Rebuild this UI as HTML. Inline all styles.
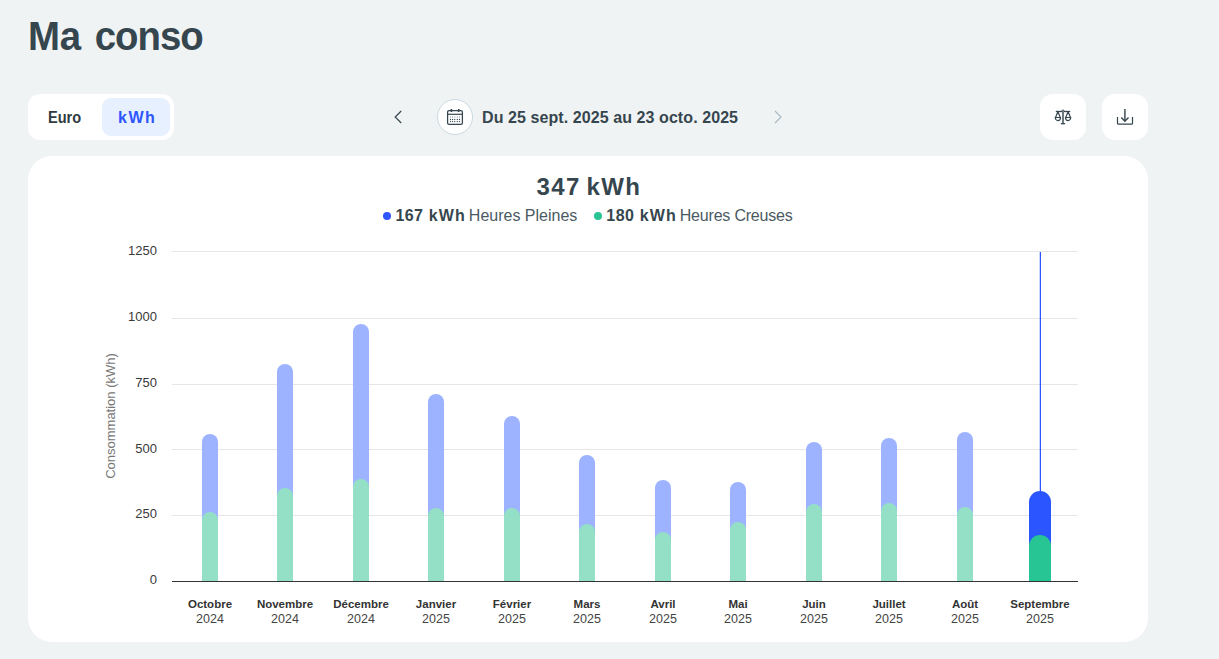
<!DOCTYPE html>
<html><head><meta charset="utf-8">
<style>
*{box-sizing:border-box;margin:0;padding:0}
html,body{width:1219px;height:659px;overflow:hidden;background:#f0f3f4;font-family:"Liberation Sans",sans-serif;color:#36464e}
.abs{position:absolute}
.title{left:28px;top:12px;font-size:40px;font-weight:bold;letter-spacing:-0.3px;transform:scaleX(0.96);transform-origin:0 0;line-height:48px;color:#36464e;white-space:nowrap}
.toggle{left:28px;top:94px;width:146px;height:46px;background:#fff;border-radius:12px}
.euro{left:48px;top:109px;font-size:16px;transform:scaleX(0.91);transform-origin:0 0;font-weight:bold;line-height:18px;color:#2f3b42}
.kwhtab{left:102px;top:98px;width:68px;height:38px;background:#e7f0fe;border-radius:9px}
.kwh{left:118px;top:109px;font-size:16px;font-weight:bold;letter-spacing:1.5px;line-height:18px;color:#2f55ff}
.circle{left:437px;top:99px;width:36px;height:36px;border-radius:50%;background:#fff;border:1px solid #c9d8e0}
.date{left:482px;top:109px;letter-spacing:0.08px;font-size:16px;font-weight:bold;line-height:18px;color:#36464e;white-space:nowrap}
.btn{top:94px;width:46px;height:46px;background:#fff;border-radius:13px}
.card{left:28px;top:156px;width:1120px;height:486px;background:#fff;border-radius:24px}
.total{left:29px;width:1120px;top:173px;letter-spacing:1.4px;word-spacing:-2.4px;text-align:center;font-size:24px;font-weight:bold;line-height:28px;color:#36464e}
.legend{left:28px;width:1120px;top:207px;text-align:center;font-size:16px;line-height:18px;color:#4a5a62;white-space:nowrap}
.legend b{color:#36464e;letter-spacing:0.4px;word-spacing:0.6px}
.hc{letter-spacing:-0.2px}
.lk{letter-spacing:1.1px;margin-right:3px}
.dot{display:inline-block;width:8px;height:8px;border-radius:50%;vertical-align:1px;margin-right:4px}
svg text{font-family:"Liberation Sans",sans-serif}
.yl{font-size:13px;fill:#3a3a3a}
.xm{font-size:11.5px;font-weight:bold;fill:#333}
.xy{font-size:12.5px;fill:#444}
.yt{font-size:13px;fill:#777}
</style></head><body>
<div class="abs title">Ma <span style="letter-spacing:-1.1px;margin-left:3.8px">conso</span></div>
<div class="abs toggle"></div>
<div class="abs euro">Euro</div>
<div class="abs kwhtab"></div>
<div class="abs kwh">kWh</div>
<svg class="abs" style="left:390px;top:108px" width="16" height="18" viewBox="0 0 16 18"><path d="M11.2 3 L5.2 9 L11.2 15" fill="none" stroke="#36464e" stroke-width="1.2"/></svg>
<div class="abs circle"></div>
<svg class="abs" style="left:443px;top:105px" width="24" height="24" viewBox="0 0 24 24"><rect x="4.6" y="5.6" width="14.8" height="13.8" rx="1.4" fill="none" stroke="#36464e" stroke-width="1.25"/><path d="M4.6 9.3H19.4" stroke="#36464e" stroke-width="1.2"/><path d="M8.4 4V7M15.7 4V7" stroke="#36464e" stroke-width="1.6"/><g fill="#36464e"><circle cx="7.5" cy="14.5" r="0.65"/><circle cx="9.6" cy="14.5" r="0.65"/><circle cx="11.8" cy="14.5" r="0.65"/><circle cx="14.3" cy="14.5" r="0.65"/><circle cx="16.5" cy="14.5" r="0.65"/><circle cx="7.5" cy="16.6" r="0.65"/><circle cx="9.6" cy="16.6" r="0.65"/><circle cx="11.8" cy="16.6" r="0.65"/><circle cx="14.3" cy="16.6" r="0.65"/><circle cx="16.5" cy="16.6" r="0.65"/></g><g fill="#8a969b"><rect x="7.1" y="11.4" width="0.8" height="1.3"/><rect x="9.2" y="11.4" width="0.8" height="1.3"/><rect x="11.4" y="11.4" width="0.8" height="1.3"/><rect x="13.9" y="11.4" width="0.8" height="1.3"/><rect x="16.1" y="11.4" width="0.8" height="1.3"/></g></svg>
<div class="abs date">Du 25 sept. 2025 au 23 octo. 2025</div>
<svg class="abs" style="left:770px;top:108px" width="16" height="18" viewBox="0 0 16 18"><path d="M5 3 L11 9 L5 15" fill="none" stroke="#a5b7c0" stroke-width="1.1"/></svg>
<div class="abs btn" style="left:1040px"></div>
<div class="abs btn" style="left:1102px"></div>
<svg class="abs" style="left:1051px;top:105px" width="24" height="24" viewBox="0 0 24 24"><g fill="none" stroke="#36464e"><path d="M4.8 6.5H19.2" stroke-width="1.3"/><path d="M12 7.3V18.4" stroke="#5d6b71" stroke-width="1.8"/><circle cx="12" cy="6.1" r="1.1" stroke-width="1" fill="#fff"/><path d="M9.9 18.7H14.1" stroke-width="1.3"/><path d="M6.9 6.8L4.5 12.4M6.9 6.8L9.3 12.4M4.3 12.5H9.5A2.6 3.1 0 0 1 4.3 12.5Z" stroke-width="1.2"/><path d="M17.1 6.8L14.7 12.4M17.1 6.8L19.5 12.4M14.5 12.5H19.7A2.6 3.1 0 0 1 14.5 12.5Z" stroke-width="1.2"/></g></svg>
<svg class="abs" style="left:1113px;top:105px" width="24" height="24" viewBox="0 0 24 24"><g fill="none" stroke="#36464e"><path d="M11.9 4V15.8" stroke="#5d6b71" stroke-width="1.8"/><path d="M8.3 12.6L11.9 16.2L15.5 12.6" stroke-width="1.4"/><path d="M4.5 12V18.2Q4.5 19.2 5.5 19.2H18.5Q19.5 19.2 19.5 18.2V12" stroke-width="1.2"/></g></svg>
<div class="abs card"></div>
<div class="abs total">347 kWh</div>
<div class="abs legend"><span class="dot" style="background:#2f55ff"></span><b>167 <span class="lk">kWh</span></b>Heures Pleines<span style="display:inline-block;width:17px"></span><span class="dot" style="background:#2ac594"></span><b>180 <span class="lk">kWh</span></b><span class="hc">Heures Creuses</span></div>
<svg class="abs" style="left:0;top:0" width="1219" height="659">
<rect x="172" y="251" width="906" height="1" fill="#e6e6e6"/>
<rect x="172" y="318" width="906" height="1" fill="#e6e6e6"/>
<rect x="172" y="384" width="906" height="1" fill="#e6e6e6"/>
<rect x="172" y="449" width="906" height="1" fill="#e6e6e6"/>
<rect x="172" y="515" width="906" height="1" fill="#e6e6e6"/>
<path d="M202.0 581V442.0A8.0 8.0 0 0 1 218.0 442.0V581Z" fill="#9db3ff"/>
<path d="M202.0 581V520.0A8.0 8.0 0 0 1 218.0 520.0V581Z" fill="#93e0c6"/>
<path d="M277.0 581V372.0A8.0 8.0 0 0 1 293.0 372.0V581Z" fill="#9db3ff"/>
<path d="M277.0 581V496.0A8.0 8.0 0 0 1 293.0 496.0V581Z" fill="#93e0c6"/>
<path d="M353.0 581V332.0A8.0 8.0 0 0 1 369.0 332.0V581Z" fill="#9db3ff"/>
<path d="M353.0 581V487.0A8.0 8.0 0 0 1 369.0 487.0V581Z" fill="#93e0c6"/>
<path d="M428.0 581V402.0A8.0 8.0 0 0 1 444.0 402.0V581Z" fill="#9db3ff"/>
<path d="M428.0 581V516.0A8.0 8.0 0 0 1 444.0 516.0V581Z" fill="#93e0c6"/>
<path d="M504.0 581V424.0A8.0 8.0 0 0 1 520.0 424.0V581Z" fill="#9db3ff"/>
<path d="M504.0 581V516.0A8.0 8.0 0 0 1 520.0 516.0V581Z" fill="#93e0c6"/>
<path d="M579.0 581V463.0A8.0 8.0 0 0 1 595.0 463.0V581Z" fill="#9db3ff"/>
<path d="M579.0 581V532.0A8.0 8.0 0 0 1 595.0 532.0V581Z" fill="#93e0c6"/>
<path d="M655.0 581V488.0A8.0 8.0 0 0 1 671.0 488.0V581Z" fill="#9db3ff"/>
<path d="M655.0 581V540.0A8.0 8.0 0 0 1 671.0 540.0V581Z" fill="#93e0c6"/>
<path d="M730.0 581V490.0A8.0 8.0 0 0 1 746.0 490.0V581Z" fill="#9db3ff"/>
<path d="M730.0 581V530.0A8.0 8.0 0 0 1 746.0 530.0V581Z" fill="#93e0c6"/>
<path d="M806.0 581V450.0A8.0 8.0 0 0 1 822.0 450.0V581Z" fill="#9db3ff"/>
<path d="M806.0 581V512.0A8.0 8.0 0 0 1 822.0 512.0V581Z" fill="#93e0c6"/>
<path d="M881.0 581V446.0A8.0 8.0 0 0 1 897.0 446.0V581Z" fill="#9db3ff"/>
<path d="M881.0 581V511.0A8.0 8.0 0 0 1 897.0 511.0V581Z" fill="#93e0c6"/>
<path d="M957.0 581V440.0A8.0 8.0 0 0 1 973.0 440.0V581Z" fill="#9db3ff"/>
<path d="M957.0 581V515.0A8.0 8.0 0 0 1 973.0 515.0V581Z" fill="#93e0c6"/>
<path d="M1029.0 581V502.0A11.0 11.0 0 0 1 1051.0 502.0V581Z" fill="#2b55ff"/>
<path d="M1029.0 581V546.0A11.0 11.0 0 0 1 1051.0 546.0V581Z" fill="#27c593"/>
<rect x="172" y="581" width="906" height="1" fill="#333"/>
<rect x="1039.75" y="252" width="1.25" height="240" fill="#2b55ff"/>
<text x="157" y="254.5" class="yl" text-anchor="end">1250</text>
<text x="157" y="320.5" class="yl" text-anchor="end">1000</text>
<text x="157" y="386.5" class="yl" text-anchor="end">750</text>
<text x="157" y="452.5" class="yl" text-anchor="end">500</text>
<text x="157" y="517.5" class="yl" text-anchor="end">250</text>
<text x="157" y="583.5" class="yl" text-anchor="end">0</text>
<text x="210" y="608" class="xm" text-anchor="middle">Octobre</text>
<text x="210" y="623" class="xy" text-anchor="middle">2024</text>
<text x="285" y="608" class="xm" text-anchor="middle">Novembre</text>
<text x="285" y="623" class="xy" text-anchor="middle">2024</text>
<text x="361" y="608" class="xm" text-anchor="middle">Décembre</text>
<text x="361" y="623" class="xy" text-anchor="middle">2024</text>
<text x="436" y="608" class="xm" text-anchor="middle">Janvier</text>
<text x="436" y="623" class="xy" text-anchor="middle">2025</text>
<text x="512" y="608" class="xm" text-anchor="middle">Février</text>
<text x="512" y="623" class="xy" text-anchor="middle">2025</text>
<text x="587" y="608" class="xm" text-anchor="middle">Mars</text>
<text x="587" y="623" class="xy" text-anchor="middle">2025</text>
<text x="663" y="608" class="xm" text-anchor="middle">Avril</text>
<text x="663" y="623" class="xy" text-anchor="middle">2025</text>
<text x="738" y="608" class="xm" text-anchor="middle">Mai</text>
<text x="738" y="623" class="xy" text-anchor="middle">2025</text>
<text x="814" y="608" class="xm" text-anchor="middle">Juin</text>
<text x="814" y="623" class="xy" text-anchor="middle">2025</text>
<text x="889" y="608" class="xm" text-anchor="middle">Juillet</text>
<text x="889" y="623" class="xy" text-anchor="middle">2025</text>
<text x="965" y="608" class="xm" text-anchor="middle">Août</text>
<text x="965" y="623" class="xy" text-anchor="middle">2025</text>
<text x="1040" y="608" class="xm" text-anchor="middle">Septembre</text>
<text x="1040" y="623" class="xy" text-anchor="middle">2025</text>
<text transform="translate(115 416) rotate(-90)" class="yt" text-anchor="middle">Consommation (kWh)</text></svg>
</body></html>
